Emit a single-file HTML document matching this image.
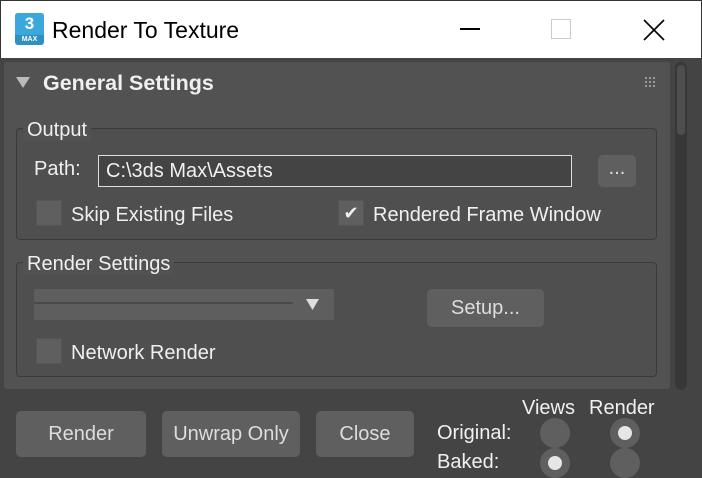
<!DOCTYPE html>
<html><head><style>
*{box-sizing:border-box;margin:0;padding:0}
body{width:702px;height:478px;overflow:hidden;background:#444;font-family:"Liberation Sans",sans-serif;color:#f0f0f0;font-size:20px;position:relative}
.a{position:absolute;line-height:22px}
.btn{position:absolute;background:#5f5f5f;border-radius:5px;color:#ddd;text-align:center;font-size:20px}
.cb{position:absolute;width:26px;height:26px;background:#5f5f5f;border:1px solid #555}
.grp{position:absolute;border:1px solid #3a3a3a;border-radius:4px;background:#4f4f4f}
.lab{position:absolute;background:#525252;padding:0 4px;font-size:20px;line-height:22px}
.rad{position:absolute;width:30px;height:30px;border-radius:50%;background:#5f5f5f}
.dot{position:absolute;left:8px;top:8px;width:14px;height:14px;border-radius:50%;background:#e6e6e6}
</style></head><body>
<div class="a" style="left:0;top:0;width:702px;height:58px;background:#fff;border:1px solid #333;border-bottom:none"></div>
<div class="a" style="left:15px;top:13px;width:29px;height:32px;background:#2f8fbf;border-radius:3px"></div>
<div class="a" style="left:15px;top:13px;width:29px;height:22px;background:#3aa8dc;border-radius:3px 3px 0 0;color:#fff;font-weight:bold;font-size:17px;text-align:center;line-height:22px">3</div>
<div class="a" style="left:15px;top:35px;width:29px;font-size:7px;color:#fff;text-align:center;font-weight:bold;line-height:9px">MAX</div>
<div class="a" style="left:52px;top:19px;color:#000;font-size:23px">Render To Texture</div>
<div class="a" style="left:460px;top:28px;width:20px;height:1.5px;background:#000"></div>
<div class="a" style="left:551px;top:19px;width:20px;height:20px;border:1.5px solid #ccc"></div>
<svg class="a" style="left:643px;top:19px" width="22" height="22"><path d="M1 1L21 21M21 1L1 21" stroke="#000" stroke-width="1.6"/></svg>

<div class="a" style="left:4px;top:62px;width:666px;height:327px;background:#525252;border-radius:3px"></div>
<div class="a" style="left:675px;top:62px;width:12px;height:328px;background:#383838;border-radius:6px"></div>
<div class="a" style="left:677px;top:65px;width:8px;height:70px;background:#4e4e4e;border-radius:4px"></div>
<svg class="a" style="left:16px;top:77px" width="14" height="12"><path d="M0 0H14L7 11Z" fill="#bbb"/></svg>
<div class="a" style="left:43px;top:72px;font-weight:bold;font-size:21.5px">General Settings</div>
<svg class="a" style="left:645px;top:77px" width="12" height="12" fill="#999"><rect x="0" y="0" width="2" height="2"/><rect x="4" y="0" width="2" height="2"/><rect x="8" y="0" width="2" height="2"/><rect x="0" y="4" width="2" height="2"/><rect x="4" y="4" width="2" height="2"/><rect x="8" y="4" width="2" height="2"/><rect x="0" y="8" width="2" height="2"/><rect x="4" y="8" width="2" height="2"/><rect x="8" y="8" width="2" height="2"/></svg>

<div class="grp" style="left:16px;top:128px;width:641px;height:112px"></div>
<div class="lab" style="left:23px;top:119px">Output</div>
<div class="a" style="left:34px;top:158px">Path:</div>
<div class="a" style="left:98px;top:155px;width:474px;height:32px;background:#444;border:1px solid #ddd;padding:4px 7px;font-size:20px">C:\3ds Max\Assets</div>
<div class="btn" style="left:598px;top:155px;width:38px;height:32px;line-height:26px">...</div>
<div class="cb" style="left:36px;top:200px"></div>
<div class="a" style="left:71px;top:204px">Skip Existing Files</div>
<div class="cb" style="left:338px;top:200px;color:#eee;font-size:18px;text-align:center;line-height:24px">✔</div>
<div class="a" style="left:373px;top:204px">Rendered Frame Window</div>

<div class="grp" style="left:16px;top:262px;width:641px;height:115px"></div>
<div class="lab" style="left:23px;top:253px">Render Settings</div>
<div class="a" style="left:34px;top:289px;width:300px;height:31px;background:#5e5e5e"></div>
<div class="a" style="left:34px;top:302px;width:259px;height:2px;background:#4a4a4a"></div>
<svg class="a" style="left:306px;top:299px" width="14" height="12"><path d="M0 0H13L6.5 11Z" fill="#ddd"/></svg>
<div class="btn" style="left:427px;top:289px;width:117px;height:38px;line-height:38px">Setup...</div>
<div class="cb" style="left:36px;top:338px"></div>
<div class="a" style="left:71px;top:342px">Network Render</div>

<div class="btn" style="left:16px;top:411px;width:130px;height:46px;line-height:46px">Render</div>
<div class="btn" style="left:162px;top:411px;width:138px;height:46px;line-height:46px">Unwrap Only</div>
<div class="btn" style="left:316px;top:411px;width:98px;height:46px;line-height:46px">Close</div>
<div class="a" style="left:522px;top:397px">Views</div>
<div class="a" style="left:589px;top:397px">Render</div>
<div class="a" style="left:437px;top:422px">Original:</div>
<div class="a" style="left:437px;top:451px">Baked:</div>
<div class="rad" style="left:540px;top:418px"></div>
<div class="rad" style="left:610px;top:418px"><div class="dot"></div></div>
<div class="rad" style="left:540px;top:448px"><div class="dot"></div></div>
<div class="rad" style="left:610px;top:448px"></div>
</body></html>
